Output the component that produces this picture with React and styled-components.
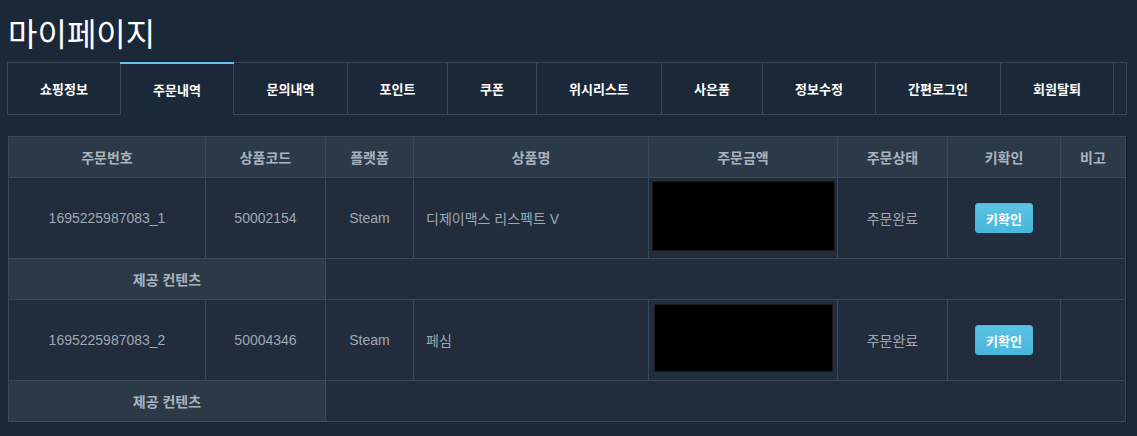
import React from 'react';
import styled, { createGlobalStyle, css } from 'styled-components';

const GlobalStyle = createGlobalStyle`
  body {
    margin: 0;
    background: #1b2838;
    font-family: 'Liberation Sans', 'Noto Sans CJK KR', sans-serif;
  }
`;

const Page = styled.div`
  width: 1120px;
  padding-left: 7px;
`;

const Title = styled.h1`
  display: flex;
  align-items: center;
  height: 62px;
  margin: 0;
  padding: 1px 0 0 1px;
  box-sizing: border-box;
  font-family: 'Noto Sans CJK KR', sans-serif;
  font-size: 32px;
  font-weight: 400;
  color: #ffffff;
`;

const TabBar = styled.div`
  display: flex;
  height: 51px;
  border: 1px solid #3a4656;
`;

const Tab = styled.div`
  position: relative;
  display: flex;
  align-items: center;
  justify-content: center;
  box-sizing: border-box;
  width: ${(p) => p.$w}px;
  border-right: 1px solid #3a4656;
  font-size: 13px;
  font-weight: 700;
  color: #ffffff;
  background: #1b2838;

  ${(p) =>
    p.$active &&
    css`
      margin-bottom: -1px;
      &::before {
        content: '';
        position: absolute;
        top: -1px;
        left: -1px;
        right: -1px;
        height: 2px;
        background: #66c0f4;
      }
    `}
`;

const Table = styled.table`
  margin: 21px 0 0 1px;
  width: 1118px;
  table-layout: fixed;
  border-collapse: collapse;
  box-shadow: 1px 1px 0 #121b26;
  font-size: 14px;
`;

const Th = styled.th`
  height: 40px;
  padding: 0;
  background: #2c3a48;
  border: 1px solid #3b4858;
  color: #a9b3bd;
  font-weight: 700;
  text-align: center;
`;

const Td = styled.td`
  height: 80px;
  padding: 0;
  background: #212d3d;
  border: 1px solid #3b4858;
  color: #9ea8b2;
  text-align: ${(p) => (p.$left ? 'left' : 'center')};
  padding-left: ${(p) => (p.$left ? '12px' : '0')};
`;

const ContentLabel = styled.td`
  height: 40px;
  padding: 0;
  background: #2c3a48;
  border: 1px solid #3b4858;
  color: #a9b3bd;
  font-weight: 700;
  text-align: center;
`;

const ContentCell = styled.td`
  background: #212d3d;
  border: 1px solid #3b4858;
`;

const Masked = styled.div`
  box-sizing: border-box;
  margin: -4px auto 0;
  background: #000000;
  border: 1px solid #1a1a1a;
`;

const KeyButton = styled.button`
  width: 58px;
  height: 30px;
  padding: 0;
  border: 1px solid #46b8da;
  border-radius: 3px;
  background: linear-gradient(#5bc3e2, #4ab6dc);
  color: #ffffff;
  font-family: inherit;
  font-size: 13px;
  font-weight: 700;
  cursor: pointer;
`;

const tabs = [
  { label: '쇼핑정보', w: 113 },
  { label: '주문내역', w: 113, active: true },
  { label: '문의내역', w: 114 },
  { label: '포인트', w: 100 },
  { label: '쿠폰', w: 89 },
  { label: '위시리스트', w: 125 },
  { label: '사은품', w: 101 },
  { label: '정보수정', w: 113 },
  { label: '간편로그인', w: 125 },
  { label: '회원탈퇴', w: 113 },
];

const columns = [
  { label: '주문번호', w: 197 },
  { label: '상품코드', w: 120 },
  { label: '플랫폼', w: 88 },
  { label: '상품명', w: 235 },
  { label: '주문금액', w: 189 },
  { label: '주문상태', w: 110 },
  { label: '키확인', w: 113 },
  { label: '비고', w: 65 },
];

const orders = [
  { no: '1695225987083_1', code: '50002154', platform: 'Steam', name: '디제이맥스 리스펙트 V', box: [183, 70] },
  { no: '1695225987083_2', code: '50004346', platform: 'Steam', name: '페심', box: [179, 68] },
];

export default function App() {
  return (
    <Page>
      <GlobalStyle />
      <Title>마이페이지</Title>
      <TabBar>
        {tabs.map((t) => (
          <Tab key={t.label} $w={t.w} $active={t.active}>
            {t.label}
          </Tab>
        ))}
      </TabBar>
      <Table>
        <colgroup>
          {columns.map((c) => (
            <col key={c.label} style={{ width: c.w }} />
          ))}
        </colgroup>
        <thead>
          <tr>
            {columns.map((c) => (
              <Th key={c.label}>{c.label}</Th>
            ))}
          </tr>
        </thead>
        <tbody>
          {orders.map((o) => (
            <React.Fragment key={o.no}>
              <tr>
                <Td>{o.no}</Td>
                <Td>{o.code}</Td>
                <Td>{o.platform}</Td>
                <Td $left>{o.name}</Td>
                <Td>
                  <Masked style={{ width: o.box[0], height: o.box[1] }} />
                </Td>
                <Td>주문완료</Td>
                <Td>
                  <KeyButton>키확인</KeyButton>
                </Td>
                <Td />
              </tr>
              <tr>
                <ContentLabel colSpan={2}>제공 컨텐츠</ContentLabel>
                <ContentCell colSpan={6} />
              </tr>
            </React.Fragment>
          ))}
        </tbody>
      </Table>
    </Page>
  );
}
